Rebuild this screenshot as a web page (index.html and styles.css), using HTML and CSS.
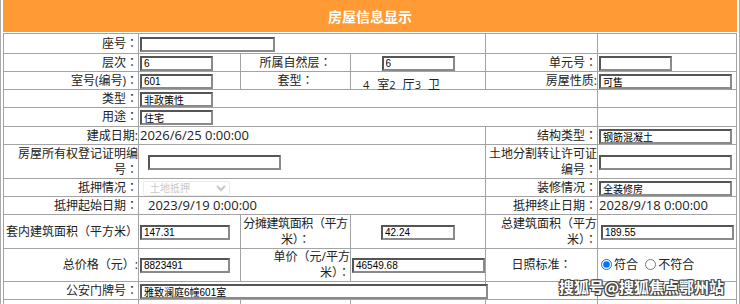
FILE: index.html
```html
<!DOCTYPE html>
<html lang="zh-CN">
<head>
    <meta charset="UTF-8">
    <title>房屋信息显示</title>
    <link rel="stylesheet" href="styles.css">
</head>
<body>
    <div class="page">
        <div class="title">房屋信息显示</div>
        <table class="info">
            <colgroup>
                <col class="c1"><col class="c2"><col class="c3"><col class="c4"><col class="c5"><col class="c6">
            </colgroup>
            <tr class="tall">
                <td class="lbl">座号：</td>
                <td colspan="3"><input class="txt w134" type="text"></td>
                <td></td>
                <td></td>
            </tr>
            <tr>
                <td class="lbl">层次：</td>
                <td><input class="txt w72" type="text" value="6"></td>
                <td class="mid">所属自然层：</td>
                <td class="mid"><input class="txt w72" type="text" value="6"></td>
                <td class="lbl">单元号：</td>
                <td><input class="txt w72" type="text"></td>
            </tr>
            <tr>
                <td class="lbl">室号(编号)：</td>
                <td><input class="txt w72" type="text" value="601"></td>
                <td class="mid">套型：</td>
                <td class="layout"><span class="num">4</span>室<span class="num">2</span>厅<span class="num">3</span>卫</td>
                <td class="lbl">房屋性质:</td>
                <td><input class="txt w132" type="text" value="可售"></td>
            </tr>
            <tr>
                <td class="lbl">类型：</td>
                <td colspan="4"><input class="txt w72" type="text" value="非政策性"></td>
                <td></td>
            </tr>
            <tr class="mid19">
                <td class="lbl">用途：</td>
                <td colspan="4"><input class="txt w72" type="text" value="住宅"></td>
                <td></td>
            </tr>
            <tr>
                <td class="lbl">建成日期:</td>
                <td colspan="3"><span class="date">2026/6/25 0:00:00</span></td>
                <td class="lbl">结构类型：</td>
                <td><input class="txt w132" type="text" value="钢筋混凝土"></td>
            </tr>
            <tr class="two">
                <td class="lbl">房屋所有权登记证明编<br>号：</td>
                <td colspan="3" class="indent"><input class="txt w132" type="text"></td>
                <td class="lbl">土地分割转让许可证<br>编号：</td>
                <td><input class="txt w132" type="text"></td>
            </tr>
            <tr>
                <td class="lbl">抵押情况：</td>
                <td colspan="3"><select class="sel" disabled><option>土地抵押</option></select></td>
                <td class="lbl">装修情况：</td>
                <td><input class="txt w132" type="text" value="全装修房"></td>
            </tr>
            <tr>
                <td class="lbl">抵押起始日期：</td>
                <td colspan="3" class="indent"><span class="date">2023/9/19 0:00:00</span></td>
                <td class="lbl">抵押终止日期：</td>
                <td><span class="date">2028/9/18 0:00:00</span></td>
            </tr>
            <tr class="two">
                <td class="lbl nowrap">套内建筑面积（平方米）</td>
                <td><input class="txt w89" type="text" value="147.31"></td>
                <td class="mid nowrap tight">分摊建筑面积（平方<br>米）：</td>
                <td class="mid"><input class="txt w73" type="text" value="42.24"></td>
                <td class="lbl nowrap">总建筑面积（平方<br>米）：</td>
                <td class="pad3"><input class="txt w132" type="text" value="189.55"></td>
            </tr>
            <tr class="two33">
                <td class="lbl">总价格（元）:</td>
                <td><input class="txt w89" type="text" value="8823491"></td>
                <td class="lbl nowrap">单价（元/平方<br>米）：</td>
                <td><input class="txt w132" type="text" value="46549.68"></td>
                <td class="mid">日照标准：</td>
                <td class="radios">
                    <label><input type="radio" name="sun" checked>符合</label>
                    <label><input type="radio" name="sun">不符合</label>
                </td>
            </tr>
            <tr>
                <td class="lbl">公安门牌号：</td>
                <td colspan="3"><input class="txt w347" type="text" value="雅致澜庭6幢601室"></td>
                <td></td>
                <td></td>
            </tr>
            <tr>
                <td></td>
                <td></td>
                <td></td>
                <td></td>
                <td></td>
                <td></td>
            </tr>
        </table>
        <div class="mark">搜狐号@搜狐焦点鄂州站</div>
    </div>
</body>
</html>
```

FILE: styles.css
```css
body {
    margin: 0;
    font-family: "Open Sans", "Noto Sans CJK JP", sans-serif;
    font-feature-settings: "locl" 0;
    font-size: 12px;
    color: #222;
    background-color: #fff;
}
.page {
    position: relative;
    width: 734px;
    height: 304px;
    padding: 0 2px;
    border-left: 1px solid #aaa;
    border-right: 1px solid #aaa;
    overflow: hidden;
}
.title {
    height: 32px;
    line-height: 34px;
    margin-bottom: 1px;
    background-color: #ff9a35;
    color: #fff;
    font-family: "Open Sans", "Noto Sans CJK SC", sans-serif;
    font-size: 14px;
    font-weight: bold;
    text-align: center;
}
.info {
    width: 734px;
    border-collapse: collapse;
    table-layout: fixed;
}
.c1 { width: 135px; }
.c2 { width: 102px; }
.c3 { width: 110px; }
.c4 { width: 135px; }
.c5 { width: 112px; }
.c6 { width: 139px; }
.info td {
    height: 17px;
    padding: 0 1px 0 1px;
    border: 1px solid #a3a3a3;
    line-height: 16px;
    vertical-align: middle;
    text-align: left;
}
.info tr.tall td {
    height: 19px;
}
.info tr.mid19 td {
    height: 18px;
}
.info tr.two td {
    height: 33px;
}
.info tr.two33 td {
    height: 32px;
}
.info td.lbl {
    text-align: right;
    padding-right: 0;
}
.info td.mid {
    text-align: center;
}
.info td.tight {
    padding: 0;
    letter-spacing: -0.4px;
}
.info td.indent {
    padding-left: 9px;
}
.info td.pad3 {
    padding-left: 3px;
}
.nowrap {
    white-space: nowrap;
}
.info td.layout {
    vertical-align: bottom;
    padding-left: 12px;
    line-height: 8px;
    font-size: 12px;
}
.num {
    font-size: 11px;
    margin-right: 7px;
}
.num:first-child {
    margin-right: 8px;
}
.date {
    font-size: 13px;
}
.txt {
    box-sizing: border-box;
    height: 15px;
    margin: 0;
    padding: 0 2px;
    border: 2px solid;
    border-color: #555 #8a8a8a #8a8a8a #555;
    font-family: "Liberation Sans", "Noto Sans CJK SC", sans-serif;
    font-size: 10px;
    color: #000;
    background-color: #fff;
    vertical-align: middle;
}
.w72 { width: 73px; }
.w73 { width: 74px; }
.w89 { width: 90px; }
.w132 { width: 133px; }
.w134 { width: 135px; }
.w347 { width: 348px; }
.sel {
    box-sizing: border-box;
    width: 87px;
    height: 15px;
    margin: 0 0 0 3px;
    padding: 0 0 0 2px;
    border: 1px solid #e3e3e3;
    border-radius: 2px;
    background-color: #fff;
    color: #b0b0b0;
    font-family: "Liberation Sans", "Noto Sans CJK SC", sans-serif;
    font-size: 10px;
    vertical-align: middle;
}
.radios {
    padding-left: 3px;
}
.radios label {
    margin-right: 2px;
}
.radios input {
    width: 11px;
    height: 11px;
    margin: 0 2px 0 2px;
    vertical-align: -1px;
}
.mark {
    position: absolute;
    right: 15px;
    bottom: 7px;
    color: #fff;
    font-family: "Noto Sans CJK SC", sans-serif;
    font-size: 15px;
    font-weight: bold;
    text-shadow: 1px 1px 0 #444, -1px -1px 0 #444, 1px -1px 0 #444, -1px 1px 0 #444, 0 0 2px #222;
}
```
